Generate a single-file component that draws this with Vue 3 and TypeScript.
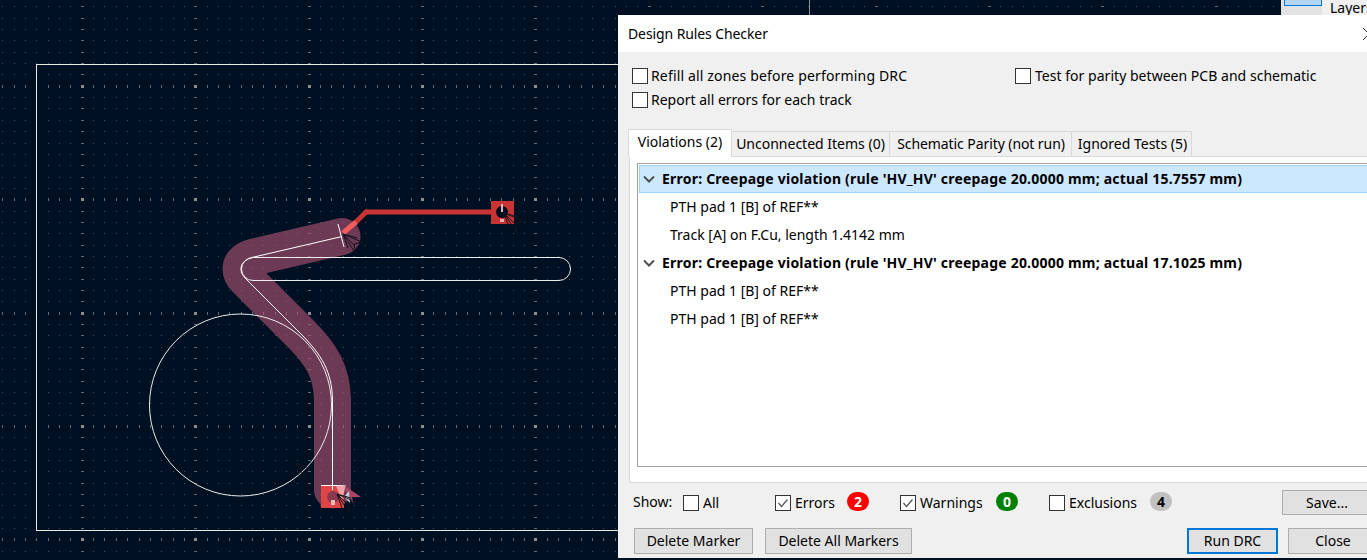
<script setup lang="ts">
import { computed } from 'vue'

const PITCH = 11.34
const X0 = 82.3
const Y0 = 86.3

function positions(origin: number, max: number): { v: number; major: boolean }[] {
  const out: { v: number; major: boolean }[] = []
  const first = -Math.floor(origin / PITCH)
  for (let i = first; origin + i * PITCH < max; i++) {
    out.push({ v: Math.floor(origin + i * PITCH), major: ((i % 10) + 10) % 10 === 0 })
  }
  return out
}

const grid = computed(() => {
  const xs = positions(X0, 1367)
  const ys = positions(Y0, 560)
  let minor = ''
  let tick = ''
  let major = ''
  for (const y of ys) {
    for (const x of xs) {
      if (x.major && y.major) major += `M${x.v - 1} ${y.v - 1}h3v3h-3z`
      else if (y.major) tick += `M${x.v} ${y.v - 1}h1v3h-1z`
      else if (x.major) tick += `M${x.v - 1} ${y.v}h3v1h-3z`
      else minor += `M${x.v} ${y.v}h1v1h-1z`
    }
  }
  return { minor, tick, major }
})

const TRACK =
  'M342 236.5 L254 257 C246 259 241 263 241 269 C241 273 243 276 246 279 L300 333 C322 355 332 372 332.5 400 L332.5 490'

const darkMarkers = [
  { id: 'm1', at: 'translate(343 234)' },
  { id: 'm2', at: 'translate(504 213)' },
  { id: 'm3', at: 'translate(337 494)' },
  { id: 'm4', at: 'translate(295 463) scale(.8)' },
]

const options = [
  { id: 'refill', label: 'Refill all zones before performing DRC' },
  { id: 'parity', label: 'Test for parity between PCB and schematic' },
  { id: 'report', label: 'Report all errors for each track' },
]

const tabs = [
  { id: 'violations', label: 'Violations (2)', active: true },
  { id: 'unconnected', label: 'Unconnected Items (0)', active: false },
  { id: 'schematic', label: 'Schematic Parity (not run)', active: false },
  { id: 'ignored', label: 'Ignored Tests (5)', active: false },
]

const rows = [
  { id: 1, text: "Error: Creepage violation (rule 'HV_HV' creepage 20.0000 mm; actual 15.7557 mm)", head: true, sel: true },
  { id: 2, text: 'PTH pad 1 [B] of REF**', head: false, sel: false },
  { id: 3, text: 'Track [A] on F.Cu, length 1.4142 mm', head: false, sel: false },
  { id: 4, text: "Error: Creepage violation (rule 'HV_HV' creepage 20.0000 mm; actual 17.1025 mm)", head: true, sel: false },
  { id: 5, text: 'PTH pad 1 [B] of REF**', head: false, sel: false },
  { id: 6, text: 'PTH pad 1 [B] of REF**', head: false, sel: false },
]

const filters = [
  { id: 'all', label: 'All', checked: false, badge: '', tone: '' },
  { id: 'errors', label: 'Errors', checked: true, badge: '2', tone: 'red' },
  { id: 'warnings', label: 'Warnings', checked: true, badge: '0', tone: 'green' },
  { id: 'exclusions', label: 'Exclusions', checked: false, badge: '4', tone: 'grey' },
]
</script>

<template>
  <div class="screen">
    <svg class="board" width="1367" height="560" viewBox="0 0 1367 560">
      <rect width="1367" height="560" fill="#001023" />
      <path :d="grid.minor" fill="#454e59" shape-rendering="crispEdges" />
      <path :d="grid.tick" fill="#646a72" shape-rendering="crispEdges" />
      <path :d="grid.major" fill="#8e8e8e" shape-rendering="crispEdges" />

      <rect x="36.5" y="64.5" width="773" height="466" fill="none" stroke="#e8e8e8" shape-rendering="crispEdges" />
      <line x1="809.5" y1="0" x2="809.5" y2="64" stroke="#8a8f96" shape-rendering="crispEdges" />

      <path d="M366 212 H500" stroke="#c83434" stroke-width="5" fill="none" />
      <path d="M356 222 L366 212" stroke="#c83434" stroke-width="5" fill="none" stroke-linecap="round" />

      <rect x="491" y="201" width="23" height="23" fill="#c83434" />
      <circle cx="502" cy="212" r="6" fill="#000d1e" />
      <rect x="501" y="204" width="2" height="8" fill="#d8b8b8" />
      <rect x="500" y="219" width="4" height="3" fill="#e8b0b0" />

      <path :d="TRACK" fill="none" stroke="#b65676" stroke-opacity="0.6" stroke-width="37" stroke-linecap="round" stroke-linejoin="round" />

      <rect x="321" y="485" width="23" height="23" fill="#e04444" />

      <path d="M343 233 L356 222" stroke="#f25c5c" stroke-width="5" fill="none" />

      <rect x="241.5" y="257.5" width="329" height="23" rx="11.5" fill="none" stroke="#ececec" />
      <circle cx="240.5" cy="405" r="91" fill="none" stroke="#ececec" />
      <path :d="TRACK" fill="none" stroke="#ffffff" stroke-width="1" />
      <line x1="338" y1="224" x2="344" y2="247" stroke="#ffffff" />
      <line x1="321" y1="485.5" x2="344" y2="485.5" stroke="#ffffff" />

      <circle cx="333" cy="497" r="6" fill="#8a3a50" />
      <path d="M336 486 L346 485 L342 500 Z" fill="#eba3a8" />
      <rect x="331" y="500" width="4" height="5" fill="#f0b8b8" />
      <path d="M345 486 L361 497 L352 497 L354 504 L347 496 Z" fill="#a8456a" />
      <path d="M344 497 L349 491 L350 503 Z" fill="#c9ccd4" />

      <g v-for="m in darkMarkers" :key="m.id" :transform="m.at" fill="none" stroke="#14141f" stroke-width="1">
        <path d="M0 0 L19 8 L11 10 L13 20 Z" />
        <path d="M0 0 L14 4 M0 0 L12 12 M0 0 L5 14" />
      </g>
    </svg>

    <div class="toolbar">
      <div class="tool-btn"><span class="tool-swatch"></span></div>
      <div class="tool-sep"></div>
      <div class="tool-label">Layers</div>
    </div>

    <section class="dialog">
      <header class="titlebar">
        <span class="title">Design Rules Checker</span>
        <svg class="close-x" width="14" height="14" viewBox="0 0 14 14">
          <path d="M1 1 L13 13 M13 1 L1 13" stroke="#222" stroke-width="1" fill="none" />
        </svg>
      </header>

      <div class="options">
        <label v-for="o in options" :key="o.id" class="check" :class="o.id">
          <span class="box"></span>
          <span class="check-text">{{ o.label }}</span>
        </label>
      </div>

      <nav class="tabs">
        <div v-for="t in tabs" :key="t.id" class="tab" :class="{ active: t.active }">{{ t.label }}</div>
      </nav>

      <div class="panel">
        <div class="tree">
          <div v-for="r in rows" :key="r.id" class="row" :class="{ head: r.head, sel: r.sel }">
            <svg v-if="r.head" class="chev" width="12" height="8" viewBox="0 0 12 8">
              <path d="M1 1.5 L6 6.5 L11 1.5" stroke="#505050" stroke-width="2" fill="none" />
            </svg>
            <span>{{ r.text }}</span>
          </div>
        </div>
      </div>

      <div class="show-row">
        <span class="show-label">Show:</span>
        <div v-for="f in filters" :key="f.id" class="filter" :class="f.id">
          <span class="box">
            <svg v-if="f.checked" width="14" height="14" viewBox="0 0 14 14">
              <path d="M2.5 7 L5.5 10.5 L11.5 3.5" stroke="#555" stroke-width="1.2" fill="none" />
            </svg>
          </span>
          <span class="filter-label">{{ f.label }}</span>
          <span v-if="f.badge" class="badge" :class="f.tone">{{ f.badge }}</span>
        </div>
        <button class="btn save">Save...</button>
      </div>

      <div class="btn-row">
        <button class="btn marker">Delete Marker</button>
        <button class="btn markers">Delete All Markers</button>
        <button class="btn run">Run DRC</button>
        <button class="btn close">Close</button>
      </div>
    </section>
  </div>
</template>

<style>
html,
body {
  margin: 0;
  overflow: hidden;
  background: #001023;
}
</style>

<style scoped>
.screen {
  position: relative;
  width: 1367px;
  height: 560px;
  overflow: hidden;
  font-family: "Noto Sans", "Open Sans", sans-serif;
  font-size: 14px;
  color: #000;
}
.board {
  position: absolute;
  left: 0;
  top: 0;
  display: block;
}
.toolbar {
  position: absolute;
  left: 1281px;
  top: 0;
  width: 86px;
  height: 15px;
  display: flex;
  background: #f0f0f0;
  overflow: hidden;
}
.tool-btn {
  width: 44px;
  background: #e3e3e3;
  padding-left: 3px;
  box-sizing: border-box;
}
.tool-swatch {
  display: block;
  width: 38px;
  height: 6px;
  background: #b3d7f3;
  border: 1px solid #0078d7;
  border-top: 0;
  box-sizing: border-box;
}
.tool-sep {
  width: 5px;
  background: #d0d0d0;
}
.tool-label {
  margin-left: 8px;
  margin-top: -2px;
  line-height: 20px;
}
.dialog {
  position: absolute;
  left: 618px;
  top: 15px;
  width: 760px;
  height: 543px;
  background: #f0f0f0;
  display: flex;
  flex-direction: column;
  overflow: hidden;
}
.titlebar {
  height: 37px;
  flex: none;
  background: #fff;
  display: flex;
  align-items: center;
  justify-content: space-between;
  padding: 0 2px 0 10px;
}
.title {
  letter-spacing: -0.1px;
}
.options {
  display: grid;
  grid-template-columns: 383px 1fr;
  grid-auto-rows: 16px;
  row-gap: 8px;
  padding: 16px 0 0 14px;
  height: 40px;
  flex: none;
}
.check {
  display: flex;
  align-items: center;
  gap: 3px;
  white-space: nowrap;
}
.check-text {
  margin-top: -2px;
}
.check.refill { letter-spacing: 0.16px; }
.check.parity { letter-spacing: 0.03px; gap: 4px; }
.box {
  width: 16px;
  height: 16px;
  flex: none;
  box-sizing: border-box;
  background: #fff;
  border: 1px solid #333;
  display: flex;
}
.tabs {
  display: flex;
  align-items: flex-end;
  height: 28px;
  margin: 21px 0 0 10px;
  flex: none;
  position: relative;
  z-index: 1;
}
.tab {
  height: 25px;
  margin-bottom: 1px;
  box-sizing: border-box;
  border: 1px solid #d9d9d9;
  border-left: 0;
  border-bottom: 0;
  padding: 0 4px 2px;
  display: flex;
  align-items: center;
  justify-content: center;
  white-space: nowrap;
}
.tab:nth-child(1) { width: 104px; }
.tab:nth-child(2) { width: 158px; }
.tab:nth-child(3) { width: 182px; letter-spacing: -0.08px; padding-left: 5px; }
.tab:nth-child(4) { width: 120px; padding-left: 6px; }
.tab.active {
  height: 28px;
  margin-bottom: 0;
  background: #fff;
  border-left: 1px solid #d9d9d9;
  padding-bottom: 4px;
}
.panel {
  margin: -1px 0 0 11px;
  height: 327px;
  flex: none;
  box-sizing: border-box;
  background: #fff;
  border: 1px solid #d9d9d9;
  padding: 6px 0 15px 7px;
}
.tree {
  height: 100%;
  box-sizing: border-box;
  border: 1px solid #a0a0a0;
  border-right: 0;
  padding: 1px 0 0 1px;
}
.row {
  height: 28px;
  box-sizing: border-box;
  padding: 0 0 2px 31px;
  display: flex;
  align-items: center;
  white-space: nowrap;
  position: relative;
}
.row.head {
  font-weight: 700;
  letter-spacing: 0.21px;
  padding-left: 23px;
}
.row.sel {
  background: #cce8ff;
  border: 1px solid #99d1ff;
  border-right: 0;
  padding-left: 22px;
}
.chev {
  position: absolute;
  left: 4px;
  top: 10px;
}
.row.sel .chev {
  left: 3px;
  top: 9px;
}
.show-row {
  display: flex;
  align-items: center;
  height: 25px;
  margin-top: 7px;
  padding-left: 15px;
  flex: none;
}
.show-label {
  width: 50px;
  flex: none;
  margin-top: -2px;
}
.filter {
  display: flex;
  align-items: center;
  flex: none;
  gap: 4px;
}
.filter.all { width: 92px; }
.filter.errors { width: 125px; }
.filter.warnings { width: 149px; }
.filter.exclusions { width: 233px; }
.filter-label { white-space: nowrap; }
.errors .filter-label { width: 48px; }
.warnings .filter-label { width: 72px; }
.exclusions .filter-label { width: 77px; }
.badge {
  width: 22px;
  height: 19px;
  border-radius: 10px;
  display: flex;
  align-items: center;
  justify-content: center;
  font-weight: 700;
  color: #fff;
  margin-top: -3px;
}
.badge.red { background: #f00; }
.badge.green { background: #008000; }
.badge.grey { background: #c0c0c0; color: #000; }
.btn {
  font: inherit;
  color: #000;
  flex: none;
  height: 26px;
  padding: 0 0 2px;
  background: #e1e1e1;
  border: 1px solid #adadad;
  box-sizing: border-box;
}
.save {
  width: 90px;
  height: 25px;
  padding: 0;
}
.btn-row {
  display: flex;
  margin-top: 13px;
  padding-left: 16px;
  flex: none;
}
.marker { width: 119px; }
.markers { width: 147px; margin-left: 12px; }
.run {
  width: 91px;
  margin-left: 275px;
  border: 2px solid #0078d7;
}
.close {
  width: 90px;
  margin-left: 10px;
}
</style>
